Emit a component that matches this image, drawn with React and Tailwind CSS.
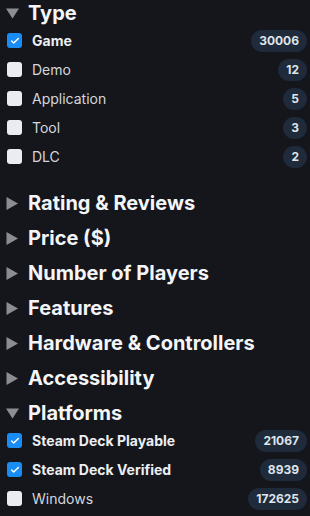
import { Check } from 'lucide-react'

const sections = [
  {
    title: 'Type',
    open: true,
    items: [
      { label: 'Game', count: 30006, checked: true },
      { label: 'Demo', count: 12 },
      { label: 'Application', count: 5 },
      { label: 'Tool', count: 3 },
      { label: 'DLC', count: 2 },
    ],
  },
  { title: 'Rating & Reviews' },
  { title: 'Price ($)' },
  { title: 'Number of Players' },
  { title: 'Features' },
  { title: 'Hardware & Controllers' },
  { title: 'Accessibility' },
  {
    title: 'Platforms',
    open: true,
    items: [
      { label: 'Steam Deck Playable', count: 21067, checked: true },
      { label: 'Steam Deck Verified', count: 8939, checked: true },
      { label: 'Windows', count: 172625 },
    ],
  },
]

function Caret({ open }) {
  return open ? (
    <svg width="13" height="11" viewBox="0 0 13 11" className="shrink-0">
      <path d="M0 0.5 L13 0.5 L6.5 10.5 Z" fill="#8b8d93" />
    </svg>
  ) : (
    <svg width="12" height="13" viewBox="0 0 12 13" className="shrink-0">
      <path d="M0.5 0 L12 6.5 L0.5 13 Z" fill="#8b8d93" />
    </svg>
  )
}

function Row({ item }) {
  return (
    <div className="flex h-[29px] items-center pl-[7px] pr-[3px]">
      {item.checked ? (
        <span className="flex h-[15px] w-[15px] items-center justify-center rounded-[3px] bg-[#1a8cf5]">
          <Check className="h-[10px] w-[10px] text-white" strokeWidth={3.5} />
        </span>
      ) : (
        <span className="h-[15px] w-[15px] rounded-[3px] bg-[#ececf0]" />
      )}
      <span
        className={
          item.checked
            ? 'ml-[10px] flex-1 text-[14px] font-bold text-[#eceef2]'
            : 'ml-[10px] flex-1 text-[14px] text-[#d4d6da]'
        }
      >
        {item.label}
      </span>
      <span className="flex h-[22px] min-w-[23px] items-center justify-center rounded-full bg-[#1f2a3a] px-[8px] text-[12px] font-bold text-[#dfe4ec]">
        {item.count}
      </span>
    </div>
  )
}

export default function App() {
  return (
    <div
      className="min-h-[516px] w-[310px] bg-[#14161c]"
      style={{ fontFamily: 'Inter, "Liberation Sans", sans-serif' }}
    >
      <div className="flex flex-col gap-[9px]">
        {sections.map((s) => (
          <div key={s.title}>
            <div className="flex h-[26px] items-center pl-[6px]">
              <div className="flex w-[22px] items-center">
                <Caret open={s.open} />
              </div>
              <span className="text-[20px] font-bold text-[#f4f5f7]">
                {s.title}
              </span>
            </div>
            {s.items && (
              <div className="pb-[10px]">
                {s.items.map((it) => (
                  <Row key={it.label} item={it} />
                ))}
              </div>
            )}
          </div>
        ))}
      </div>
    </div>
  )
}
